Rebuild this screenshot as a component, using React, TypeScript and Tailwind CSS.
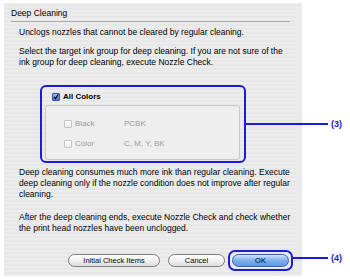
import React from 'react';

const Box: React.FC<{ checked?: boolean; disabled?: boolean }> = ({ checked, disabled }) =>
  checked ? (
    <span className="w-[8px] h-[8px] rounded-[1px] border border-[#3a52b0] bg-gradient-to-b from-[#9cc0f0] to-[#3d78d8] flex items-center justify-center">
      <svg width="8" height="8" viewBox="0 0 8 8">
        <path d="M1.2 3.8 L3.2 6.2 L7.2 0.6" fill="none" stroke="#000" strokeWidth="1.5" />
      </svg>
    </span>
  ) : (
    <span
      className={`w-[8px] h-[8px] rounded-[1px] border bg-gradient-to-b from-white to-[#ececec] ${
        disabled ? 'border-[#c4c4c4]' : 'border-[#8a8a8a]'
      }`}
    />
  );

const Pill: React.FC<{ label: string; className?: string }> = ({ label, className = '' }) => (
  <div
    className={`h-[13px] rounded-full border border-[#7d7d7d] bg-gradient-to-b from-white via-[#f2f2f2] to-[#dcdcdc] flex items-center justify-center text-[7.5px] ${className}`}
  >
    {label}
  </div>
);

export default function App() {
  return (
    <div className="relative w-[350px] h-[279px] bg-white font-['Liberation_Sans',sans-serif] text-[8.5px] text-black overflow-hidden">
      {/* dialog */}
      <div className="ml-[4px] pt-[3px]">
        <div className="w-[298px] h-[273px] bg-[repeating-linear-gradient(0deg,#ececec_0px,#ececec_2px,#e7e7e7_2px,#e7e7e7_4px)] flex flex-col">
          <div className="pl-[7px] pt-[4px] leading-[12px] text-[8.5px]">Deep Cleaning</div>
          <div className="ml-[7px] mt-[2px] w-[279px] border-t border-[#a9a9a9]" />

          <div className="pl-[15px] pr-[4px] leading-[11px] whitespace-nowrap">
            <p className="mt-[5px]">Unclogs nozzles that cannot be cleared by regular cleaning.</p>
            <p className="mt-[8px]">
              Select the target ink group for deep cleaning. If you are not sure of the
              <br />
              ink group for deep cleaning, execute Nozzle Check.
            </p>

            {/* highlighted ink group */}
            <div className="ml-[21px] mt-[17px] w-[206px] h-[78px] border-2 border-[#1c1cd8] rounded-[6px] flex flex-col">
              <div className="flex items-center gap-[3px] pl-[10px] pt-[4px]">
                <Box checked />
                <span className="font-bold text-[8px]">All Colors</span>
              </div>
              <div className="ml-[3px] mr-[4px] mt-[3px] h-[55px] border border-[#c8c8c8] rounded-[3px] bg-[#eeeeee] text-[#9a9a9a] text-[8px] pl-[18px] pt-[12px] flex flex-col gap-[9px]">
                <div className="flex items-center">
                  <Box disabled />
                  <span className="ml-[3px] w-[49px]">Black</span>
                  <span>PCBK</span>
                </div>
                <div className="flex items-center">
                  <Box disabled />
                  <span className="ml-[3px] w-[49px]">Color</span>
                  <span>C, M, Y, BK</span>
                </div>
              </div>
            </div>

            <p className="mt-[4px]">
              Deep cleaning consumes much more ink than regular cleaning. Execute
              <br />
              deep cleaning only if the nozzle condition does not improve after regular
              <br />
              cleaning.
            </p>
            <p className="mt-[12px]">
              After the deep cleaning ends, execute Nozzle Check and check whether
              <br />
              the print head nozzles have been unclogged.
            </p>
          </div>

          <div className="mt-auto mb-[5px] pr-[9px] flex items-center justify-end">
            <Pill label="Initial Check Items" className="w-[92px]" />
            <Pill label="Cancel" className="w-[57px] ml-[8px]" />
            <div className="ml-[3px] p-[2px] border-2 border-[#1c1cd8] rounded-[7px]">
              <div className="w-[57px] h-[13px] rounded-full border border-[#3a62a8] bg-gradient-to-b from-[#cfe3fb] via-[#7fb0ec] to-[#5b9ae6] flex items-center justify-center text-[7.5px]">
                OK
              </div>
            </div>
          </div>
        </div>
      </div>

      {/* callouts */}
      <div className="absolute left-[246px] top-[123px] w-[82px] h-[2px] bg-[#1c1cd8]" />
      <div className="absolute left-[331px] top-[118px] text-[9px] font-bold text-[#2424b8] leading-[12px]">(3)</div>
      <div className="absolute left-[293px] top-[257px] w-[35px] h-[2px] bg-[#1c1cd8]" />
      <div className="absolute left-[331px] top-[252px] text-[9px] font-bold text-[#2424b8] leading-[12px]">(4)</div>
    </div>
  );
}
